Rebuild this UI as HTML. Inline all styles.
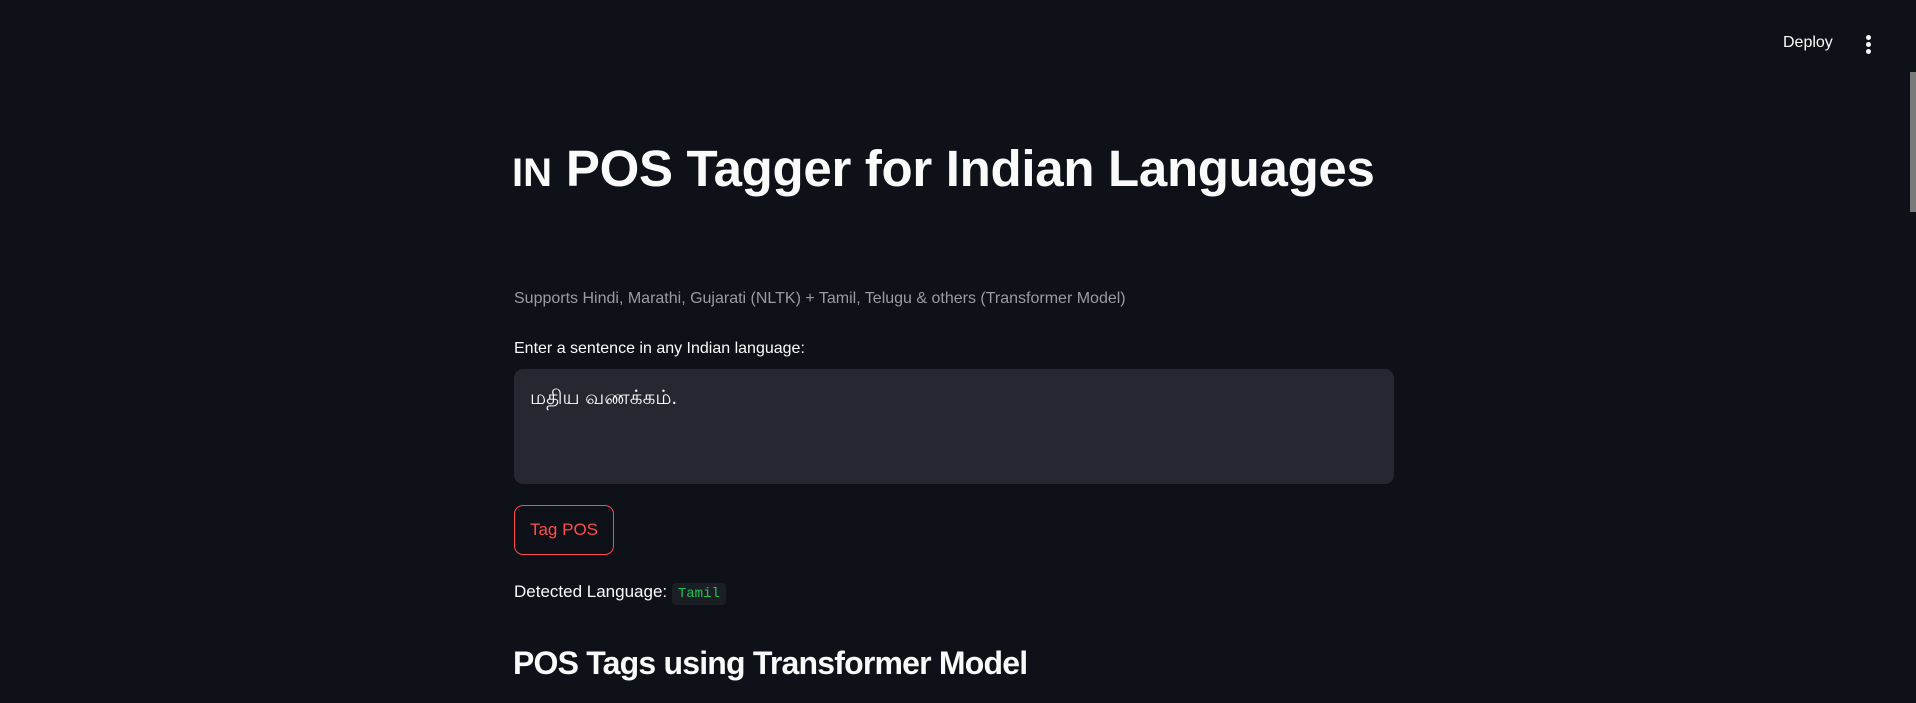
<!DOCTYPE html>
<html><head><meta charset="utf-8"><style>
html,body{margin:0;padding:0;width:1916px;height:703px;overflow:hidden;background:#0e1117;color:#fafafa;font-family:"Liberation Sans","Noto Sans CJK SC",sans-serif;}
.a{position:absolute;white-space:nowrap;}
</style></head><body>
<div class="a" style="left:1783px;top:34px;font-size:16px;color:#fafafa;">Deploy</div>
<div class="a" style="left:1866px;top:35px;width:5px;">
<div style="width:5px;height:5px;border-radius:50%;background:#fafafa;margin-bottom:2px"></div>
<div style="width:5px;height:5px;border-radius:50%;background:#fafafa;margin-bottom:2px"></div>
<div style="width:5px;height:5px;border-radius:50%;background:#fafafa;"></div></div>
<div class="a" style="left:1910px;top:72px;width:6px;height:140px;background:#7a7a7a;"></div>
<div class="a" style="left:512px;top:139px;font-size:51px;font-weight:bold;letter-spacing:-0.3px;"><span style="font-size:40px;letter-spacing:0">IN</span> POS Tagger for Indian Languages</div>
<div class="a" style="left:514px;top:290px;font-size:16px;color:#9a9ba3;">Supports Hindi, Marathi, Gujarati (NLTK) + Tamil, Telugu &amp; others (Transformer Model)</div>
<div class="a" style="left:514px;top:340px;font-size:16px;">Enter a sentence in any Indian language:</div>
<div class="a" style="left:514px;top:369px;width:880px;height:115px;background:#262730;border-radius:9px;"></div>
<div class="a" style="left:530px;top:387px;font-size:20px;">மதிய வணக்கம்.</div>
<div class="a" style="left:514px;top:505px;width:98px;height:48px;border:1px solid #ff4b4b;border-radius:9px;color:#ff4b4b;font-size:17px;line-height:48px;text-align:center;">Tag POS</div>
<div class="a" style="left:514px;top:582px;font-size:17px;">Detected Language: <span style="font-family:'Liberation Mono',monospace;font-size:14px;color:#21c354;background:#1b1e25;padding:3px 6px;border-radius:4px;">Tamil</span></div>
<div class="a" style="left:513px;top:645px;font-size:32px;font-weight:bold;letter-spacing:-0.8px;">POS Tags using Transformer Model</div>
</body></html>
